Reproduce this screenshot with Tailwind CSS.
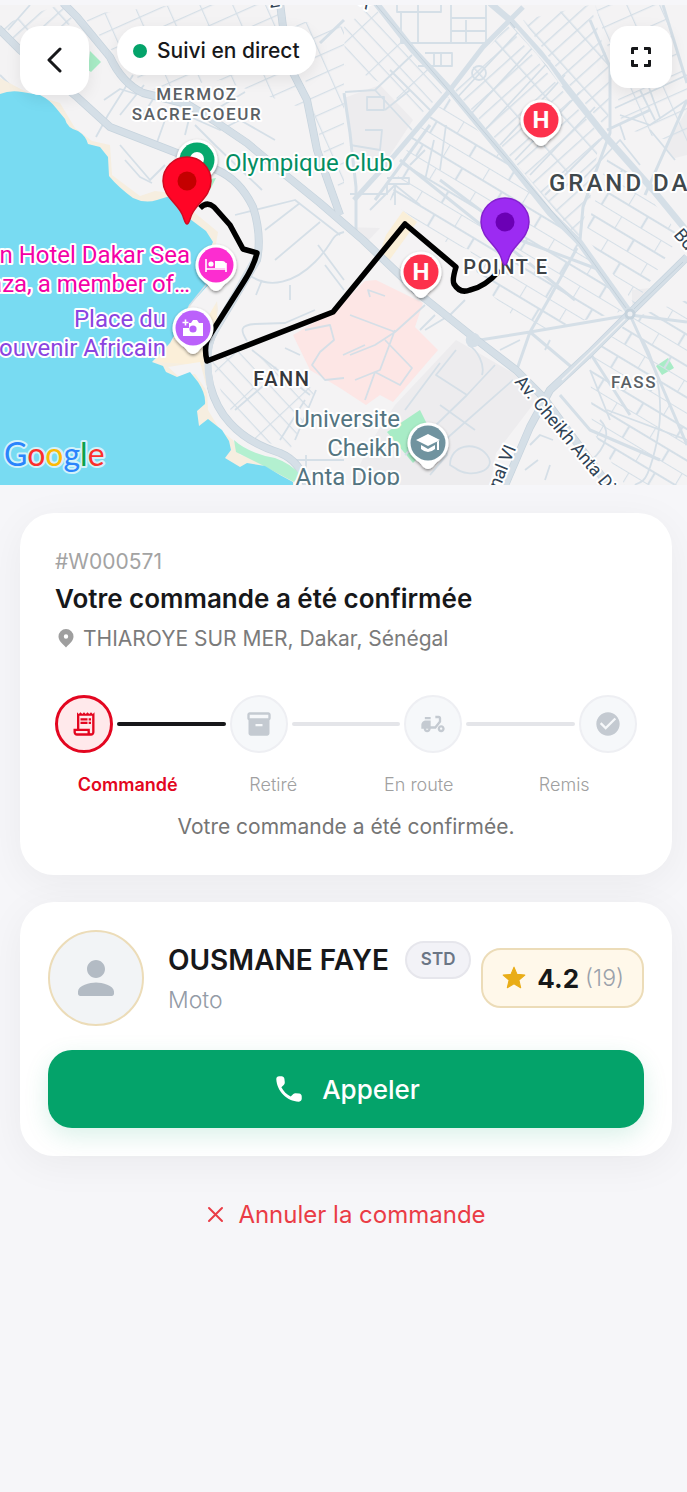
<!DOCTYPE html>
<html lang="fr">

<head>
  <meta charset="UTF-8">
  <meta name="viewport" content="width=device-width, initial-scale=1.0">
  <title>Suivi de commande</title>
  <script src="https://cdn.jsdelivr.net/npm/@tailwindcss/browser@4"></script>
</head>

<body class="bg-[#f6f6f9] min-h-screen pt-[5px] text-[#17181a] font-['Inter',sans-serif]">

  <!-- Map -->
  <section class="relative h-[480px] overflow-hidden bg-[#f4f3f4]">
    <svg class="block w-full h-full" viewBox="0 5 687 480" preserveAspectRatio="xMidYMid slice" role="img" aria-label="Carte de Dakar">
      <defs>
        <pattern id="grid-ne" width="34" height="12" patternUnits="userSpaceOnUse" patternTransform="rotate(-42)">
          <path d="M0 0H34M0 0V12" fill="none" stroke="#d5dfe7" stroke-width="3" />
        </pattern>
        <pattern id="grid-wide" width="46" height="27" patternUnits="userSpaceOnUse" patternTransform="rotate(31)">
          <path d="M0 0H46M0 0V14M23 14V27M0 14H46" fill="none" stroke="#d5dfe7" stroke-width="2.2" />
        </pattern>
        <pattern id="grid-nw" width="38" height="13" patternUnits="userSpaceOnUse" patternTransform="rotate(47)">
          <path d="M0 0H38M0 0V13" fill="none" stroke="#d5dfe7" stroke-width="2.4" />
        </pattern>
        <pattern id="grid-top" width="30" height="18" patternUnits="userSpaceOnUse" patternTransform="rotate(-24)">
          <path d="M0 0H30M0 0V18" fill="none" stroke="#d5dfe7" stroke-width="2.4" />
        </pattern>
        <filter id="shadow" x="-30%" y="-30%" width="160%" height="170%">
          <feDropShadow dx="0" dy="1.5" stdDeviation="1.5" flood-color="#000" flood-opacity=".45" />
        </filter>
        <path id="poi" d="M0 26C-4 26-6 22-9 19-15 15-20.500 9-20.500 0A20.500 20.500 0 0 1 20.500 0C20.500 9 15 15 9 19 6 22 4 26 0 26Z" />
        <path id="pin" d="M0 43C-2 43-3 37-5 33-10 22-24 15-24 0A24 24 0 0 1 24 0C24 15 10 22 5 33 3 37 2 43 0 43Z" />
      </defs>

      <!-- Land use -->
      <g fill="#edecee">
        <path d="M344 98L380 85 413 120 388 158 356 160Z" />
        <path d="M456 340L513 373 538 398 496 453 490 485H350L372 440 395 405Z" />
        <path d="M664 148L687 110V155L675 158Z" />
        <path d="M344 227L380 228 366 243Z" />
        <path d="M632 290L650 288 645 300 632 305Z" />
      </g>
      <path d="M293 335L334 311 365 281 376 280 423 303 415 327 438 350 393 402 380 395 366 405 340 388 310 370Z" fill="#fde6e5" />
      <path d="M386 235L403 211 417 222 388 262 378 258Z" fill="#faefd8" />
      <g fill="#a8ecc6">
        <path d="M90 51L101 62 91 72 88 70Z" />
        <path d="M387 432L420 410 435 440 413 463Z" />
        <path d="M656 366L668 358 674 368 662 375Z" />
        <path d="M205 180L216 178 210 190Z" />
      </g>

      <!-- Street grids -->
      <path d="M523 20L590 5 610 67 608 130 565 80Z" fill="url(#grid-ne)" />
      <path d="M595 5H663L687 83V145L622 128 614 67Z" fill="url(#grid-top)" />
      <path d="M455 90L507 25 600 135 590 200 578 238Z" fill="url(#grid-ne)" />
      <path d="M344 27L372 5 445 90 415 120 385 85 345 65Z" fill="url(#grid-nw)" />
      <path d="M410 140L448 97 575 240 628 310 530 333 480 283 470 250 440 240 390 200Z" fill="url(#grid-wide)" />
      <path d="M585 235L610 150 680 235 635 305Z" fill="url(#grid-wide)" />
      <path d="M590 358L632 318 687 300V485H625L592 430Z" fill="url(#grid-wide)" />
      <path d="M212 362L240 345 315 390 290 450 245 435 222 395Z" fill="url(#grid-nw)" />
      <path d="M82 15L175 5H280L287 60 308 110 220 80 150 90 120 60Z" fill="url(#grid-top)" />
      <path d="M290 20L344 27V200L323 150Z" fill="url(#grid-top)" />
      <path d="M0 25L60 5 75 22 20 45Z" fill="url(#grid-ne)" />

      <!-- Minor streets -->
      <g fill="none" stroke="#d5dfe7" stroke-width="1.8" stroke-linejoin="round">
        <path d="M397 5V12H441V5M401 12V43H490M418 5V42M451 5V43M451 18H486M451 31H486M466 20V42M486 5V42M425 53H452V66H418M434 53V65M441 53V65" />
        <path d="M96 137L108 115 125 88 133 75M104 100L120 89 136 94M120 115L144 85M140 120L160 88M155 148L165 120 190 105M185 135L190 115M195 125L215 145 262 190M120 145L150 180 165 165M125 160L140 177 152 183M170 108L220 130 240 120 275 140M215 110L245 92M235 215L295 200 340 235M265 230L300 203M275 260L320 222" />
        <path d="M249 275C270 290 295 282 315 262S330 235 344 232M262 280L256 295M290 285V300M318 245L344 280M325 265L344 290" />
        <path d="M247 341C240 330 240 325 255 324L285 323 315 310M252 350L310 395M285 348L300 355M270 380L235 410M280 440L305 400M306 455V485M290 460H344M316 390L295 440" />
        <path d="M305 330L330 325 334 340 320 352 312 365 325 380 344 378M350 315L395 332 375 345 350 355M395 330L380 370 355 380M385 340L412 368 400 385 375 372 365 400M395 332L425 305M370 297L368 290 385 296M343 355L365 345" />
        <path d="M456 350L436 375 467 395M440 363L405 410M495 365L467 395 405 455M440 405L475 430M513 380L445 440 447 455 430 475M468 345C478 350 485 365 482 375M450 465C450 445 475 440 487 455S470 480 455 468Z" />
        <circle cx="479" cy="73" r="7" />
        <path d="M620 115L650 125 687 100M640 90L655 120M648 85L660 118M615 108L687 75M620 125L625 140M650 130L675 160M582 180L620 140 640 165M410 165L425 150M440 170L446 125M425 180L434 140" />
        <path d="M345 92L375 90 412 55M375 90L412 130M390 70L430 110M385 110L410 90M455 100L520 30M470 115L535 45M485 130L550 60M500 145L565 75M515 160L580 92M530 175L595 107M545 195L605 135" />
        <path d="M365 130H382L380 150 350 145M367 97H384V110H367ZM387 178H409V184H387V194H350M395 185V205" />
        <path d="M530 445L540 435 553 440M525 470L538 460M545 480L550 465M600 420C615 435 600 455 585 465M643 340C660 370 665 410 655 450S640 480 635 485M607 410L687 440M590 370L610 420" />
        <path d="M370 210L395 185 420 205M420 330L435 315M425 330L445 318M465 300L450 315M520 340L500 350M550 340L545 350M30 5L8 30M35 60L50 48M0 75L15 90" />
      </g>

      <!-- Secondary streets -->
      <g fill="none" stroke="#d5dfe7" stroke-width="3" stroke-linejoin="round">
        <path d="M480 340L530 332 630 315 687 322M530 332L575 370M516 372L530 332 550 297 577 248M590 20L610 67V133L600 160 583 207 580 240M663 5L687 83M344 93L350 133 356 187V235M630 315L655 370 687 445M607 130L650 110M344 20L320 43M560 395L590 430 660 460M430 125L375 200M440 180L520 240 600 270M400 160L575 300M590 353L630 415M687 100L645 195" />
      </g>

      <!-- Main roads -->
      <g fill="none" stroke="#c6d3dd" stroke-width="8" stroke-linejoin="round">
        <path id="r1" d="M63 3L77 17 110 57Q122 83 143 93L187 104 213 120 247 143 283 173 320 203 363 240 423 297 473 337 516 370 543 397 612 490" />
        <path id="r2" d="M-2 28L20 50 77 97 110 127 177 153 217 170Q240 180 253 207 262 235 257 260L215 330Q202 352 210 385 216 408 230 423 248 443 280 453 302 462 308 490" />
        <path id="r3" d="M280 3L283 27 290 67 307 100 317 150 330 187 340 215" />
        <path id="r4" d="M687 257L630 313 590 353 550 390 530 427 503 490" />
      </g>
      <g fill="none" stroke="#d5dfe7" stroke-width="6.6">
        <use href="#r1" stroke-width="6.6" /><use href="#r2" /><use href="#r3" /><use href="#r4" />
        <path d="M376 3L413 50 450 90 510 163 550 213 580 243 630 313M490 3L510 20 540 53 563 83 606 137 653 190 690 235" />
        <path d="M523 7L483 47 450 90 393 157 354 200" stroke-width="5" />
        <circle cx="473" cy="340" r="4" />
      </g>
      <path d="M683 262L634 309M625 319L580 362M510 22L540 57 558 80M376 5L450 92 580 244 626 308" fill="none" stroke="#c3d0da" stroke-width="1" />
      <path d="M625 319L562 380M515 28L548 66 562 86" fill="none" stroke="#f0f1f3" stroke-width="1.6" />
      <circle cx="630" cy="314" r="4" fill="#eef0f3" stroke="#c6d3dd" stroke-width="3" />

      <!-- Coast and sea -->
      <path d="M0 78L30 94 60 103 75 128 92 141 110 145 112 175 140 196 155 191 172 193 195 213 218 232 215 250 204 262 213 265 218 310 212 340 206 365 208 410 220 430 233 440 240 455 265 462 285 470 303 488 0 488Z" fill="#f6eee0" />
      <path d="M190 308L215 305 217 318 203 365 155 362 170 345Z" fill="#fbefd9" />
      <path d="M168 367L200 362 210 400 206 390 195 374 178 376Z" fill="#f4f3f4" />
      <path d="M215 245L240 240 235 270 205 322 188 312 198 290Z" fill="#f4f3f4" />
      <path d="M234 440Q248 453 275 458 292 464 300 475L294 482 262 465 236 452Z" fill="#b3f0d0" />
      <path d="M0 94Q10 90 22 92L40 95Q50 100 56 108L65 119Q67 128 78 131 86 136 88 144L100 147 108 157 109 176Q118 187 133 198 145 204 157 200L170 196 190 219 206 231 213 242 204 262 210 283 188 307 180 325 170 343 152 362 163 366 166 372 177 377 190 372 198 382Q206 394 205 404L197 411 199 426 208 419 222 430 229 441 231 450 225 458 240 467 247 463 265 466 280 475 293 482V490H0Z" fill="#78dbf2" />
      <path d="M210 280L189 306" stroke="#d5dfe7" stroke-width="1.5" />
      <path d="M257 256L215 330Q204 348 210 385" fill="none" stroke="#d5dfe7" stroke-width="7" />

      <!-- Courier route -->
      <path d="M200 208Q207 201 214 207L230 225 243 249 257 253Q254 266 243 283L210 335Q203 345 207 361L333 312 405 224 456 267Q452 280 454 284 460 294 470 290 485 287 500 270" fill="none" stroke="#000" stroke-width="5.5" stroke-linejoin="round" />

      <!-- Place markers -->
      <g transform="translate(197 160)">
        <use href="#poi" fill="#fff" filter="url(#shadow)" />
        <circle r="17.5" fill="#06a96d" /><circle r="7" cy="-1" fill="#fff" />
      </g>
      <g transform="translate(216 265)">
        <use href="#poi" fill="#fff" filter="url(#shadow)" />
        <circle r="17.5" fill="#fc2dd0" />
        <path d="M-10-6V7M-10 4H10M10 7V-2" fill="none" stroke="#fff" stroke-width="1.6" />
        <circle cx="-5" cy="-1" r="2.6" fill="#fff" /><path d="M-1-4H6Q10-4 10 0V3H-1Z" fill="#fff" />
      </g>
      <g transform="translate(193 328)">
        <use href="#poi" fill="#fff" filter="url(#shadow)" />
        <circle r="17.5" fill="#bb61fb" />
        <path d="M-10 0H-4V-5H-2L0-8H4L6-5H10V8H-10Z" fill="#fff" />
        <path d="M-7.5-8.5V-2.5M-10.5-5.5H-4.5" stroke="#fff" stroke-width="1.6" />
        <circle r="3.6" cy="1" fill="#bb61fb" />
      </g>
      <g font-family="Roboto, sans-serif" font-size="24" font-weight="700" text-anchor="middle">
        <g transform="translate(541 120)">
          <use href="#poi" fill="#fff" filter="url(#shadow)" />
          <circle r="17.5" fill="#fd314c" /><text y="8" fill="#fff">H</text>
        </g>
        <g transform="translate(421 272)">
          <use href="#poi" fill="#fff" filter="url(#shadow)" />
          <circle r="17.5" fill="#fd314c" /><text y="8" fill="#fff">H</text>
        </g>
      </g>
      <g transform="translate(428 443)">
        <use href="#poi" fill="#fff" filter="url(#shadow)" />
        <circle r="17.5" fill="#70939f" />
        <path d="M0-9L-12-3 0 3 12-3ZM-7 2V6Q0 12 7 6V2L0 6ZM9-2H11V7H9Z" fill="#fff" />
      </g>

      <!-- Labels -->
      <g font-family="Roboto, sans-serif" stroke="#fff" stroke-width="4" stroke-linejoin="round" paint-order="stroke">
        <g class="tracking-widest" text-anchor="middle" font-weight="500" fill="#5a6065">
          <text x="197" y="100" font-size="17">MERMOZ</text>
          <text x="197" y="120" font-size="17">SACRE-COEUR</text>
          <text x="634" y="388" font-size="17">FASS</text>
          <text x="282" y="386" font-size="20" fill="#35383c">FANN</text>
          <text x="506" y="274" font-size="20" fill="#3e4347">POINT E</text>
          <text x="549" y="191" class="tracking-[3px]" font-size="24" fill="#3f484c" text-anchor="start">GRAND DAKAR</text>
        </g>
        <g font-size="24">
          <text x="225" y="171" fill="#038e63">Olympique Club</text>
          <g text-anchor="end">
            <text x="190" y="263" fill="#f400a6">Pullman Hotel Dakar Sea</text>
            <text x="190" y="292" fill="#f400a6">Plaza, a member of…</text>
            <text x="166" y="327" fill="#8b44e0">Place du</text>
            <text x="166" y="356" fill="#8b44e0">Souvenir Africain</text>
            <text x="400" y="427" fill="#547581">Universite</text>
            <text x="400" y="456" fill="#547581">Cheikh</text>
            <text x="400" y="485" fill="#547581">Anta Diop</text>
          </g>
        </g>
        <g font-size="18" fill="#2f4254">
          <text transform="translate(514 382) rotate(50)">Av. Cheikh Anta Diop</text>
          <text x="54" text-anchor="end" transform="translate(496 498) rotate(-68)">Canal VI</text>
          <text transform="translate(673 235) rotate(50)">Bd</text>
          <text transform="translate(270 8) rotate(-10)">Z</text>
          <text transform="translate(358 3) rotate(40)">R</text>
        </g>
        <text x="4" y="466" font-family="Lato, sans-serif" font-size="32" font-weight="400" stroke="#d3f2fa"><tspan fill="#2a84fc">G</tspan><tspan fill="#fc2f2b">o</tspan><tspan fill="#fdba05">o</tspan><tspan fill="#2a84fc">g</tspan><tspan fill="#0aa14b">l</tspan><tspan fill="#fc2f2b">e</tspan></text>
      </g>

      <!-- Courier and destination -->
      <g transform="translate(187 181)">
        <use href="#pin" fill="#ff0526" stroke="#d10a20" stroke-width="1.5" /><circle r="9.5" fill="#c40000" />
      </g>
      <g transform="translate(505 222)">
        <use href="#pin" fill="#9c2bf2" stroke="#8420cf" stroke-width="1.5" /><circle r="9.5" fill="#6b00b5" />
      </g>
    </svg>

    <!-- Controls over the map -->
    <div class="absolute inset-x-0 top-0 flex items-start pl-5 pr-[15px] pt-[21px]">
      <button type="button" aria-label="Retour" class="size-[69px] rounded-[20px] bg-white shadow-[0_4px_16px_rgba(0,0,0,0.08)] flex items-center justify-center">
        <svg class="size-7" viewBox="0 0 28 28" fill="none" stroke="#17181a" stroke-width="3" stroke-linecap="round" stroke-linejoin="round"><path d="M19 2L8 13 19 24" /></svg>
      </button>
      <div class="ml-7 h-[49px] rounded-full bg-white shadow-[0_4px_16px_rgba(0,0,0,0.08)] flex items-center gap-[10px] px-4">
        <span class="size-[14px] rounded-full bg-[#04a36a]"></span>
        <span class="text-[21px] font-medium">Suivi en direct</span>
      </div>
      <button type="button" aria-label="Plein écran" class="ml-auto size-[62px] rounded-[18px] bg-white shadow-[0_4px_16px_rgba(0,0,0,0.08)] flex items-center justify-center">
        <svg class="size-6" viewBox="0 0 24 24" fill="none" stroke="#17181a" stroke-width="3" stroke-linejoin="round"><path d="M3.500 9V3.500H9M15 3.500H20.500V9M20.500 15V20.500H15M9 20.500H3.500V15" /></svg>
      </button>
    </div>
  </section>

  <main class="pl-5 pr-[15px] pt-7">
    <!-- Order status -->
    <section class="rounded-[34px] bg-white px-[35px] pt-9 pb-[34px] shadow-[0_8px_40px_rgba(0,0,0,0.05)]">
      <p class="text-[21px] leading-[26px] text-[#a3a3a3]">#W000571</p>
      <h1 class="mt-[6px] text-[26px] leading-9 font-semibold">Votre commande a été confirmée</h1>
      <p class="mt-2 flex items-center text-[21px] leading-7 text-[#7b7b7b]">
        <svg class="w-[22px] h-6 mr-[6px] shrink-0" viewBox="0 0 22 24"><path fill="#9e9e9e" fill-rule="evenodd" d="M11 2A7.500 7.500 0 0 0 3.500 9.500C3.500 14 7.500 16.500 11 20.500 14.500 16.500 18.500 14 18.500 9.500A7.500 7.500 0 0 0 11 2ZM11 11.700A2.200 2.200 0 1 1 11 7.300 2.200 2.200 0 0 1 11 11.700Z" /></svg>
        THIAROYE SUR MER, Dakar, Sénégal
      </p>

      <div class="mt-[42px] flex items-center gap-1">
        <div class="size-[58px] shrink-0 rounded-full border-3 border-[#e30620] bg-[#ffe9eb] flex items-center justify-center">
          <svg class="size-7" viewBox="0 0 24 24" fill="#e30620"><path d="M19.500 3.500 18 2l-1.500 1.500L15 2l-1.500 1.500L12 2l-1.500 1.500L9 2 7.500 3.500 6 2v14H3v3c0 1.660 1.340 3 3 3h12c1.660 0 3-1.340 3-3V2l-1.500 1.500zM15 20H6c-.550 0-1-.450-1-1v-1h10v2zm4-1c0 .550-.450 1-1 1s-1-.450-1-1v-3H8V5h11v14zM9 7h6v2H9zm7 0h2v2h-2zm-7 3h6v2H9zm7 0h2v2h-2z" /></svg>
        </div>
        <div class="h-1 flex-1 rounded-full bg-[#17181a]"></div>
        <div class="size-[58px] shrink-0 rounded-full border-2 border-[#eeeff3] bg-[#f6f8fa] flex items-center justify-center">
          <svg class="size-7" viewBox="0 0 24 24" fill="#c4cad1"><path fill-rule="evenodd" d="M20 2H4c-1 0-2 .900-2 2v3.010c0 .720.430 1.340 1 1.690V20c0 1.100 1.100 2 2 2h14c.900 0 2-.900 2-2V8.700c.570-.350 1-.970 1-1.690V4c0-1.100-1-2-2-2zm-5 12H9v-2h6v2zm5-7H4V4h16v3z" /></svg>
        </div>
        <div class="h-1 flex-1 rounded-full bg-[#e4e5e9]"></div>
        <div class="size-[58px] shrink-0 rounded-full border-2 border-[#eeeff3] bg-[#f6f8fa] flex items-center justify-center">
          <svg class="size-7" viewBox="0 0 24 24" fill="#c4cad1"><path fill-rule="evenodd" d="M19 7c0-1.100-.900-2-2-2h-3v2h3v2.650L13.520 14H10V9H6c-2.210 0-4 1.790-4 4v3h2c0 1.660 1.340 3 3 3s3-1.340 3-3h4.480L19 10.350V7zM7 17c-.550 0-1-.450-1-1h2c0 .550-.450 1-1 1zM5 6h5v2H5zM19 13c-1.660 0-3 1.340-3 3s1.340 3 3 3 3-1.340 3-3-1.340-3-3-3zm0 4c-.550 0-1-.450-1-1s.450-1 1-1 1 .450 1 1-.450 1-1 1z" /></svg>
        </div>
        <div class="h-1 flex-1 rounded-full bg-[#e4e5e9]"></div>
        <div class="size-[58px] shrink-0 rounded-full border-2 border-[#eeeff3] bg-[#f6f8fa] flex items-center justify-center">
          <svg class="size-7" viewBox="0 0 24 24" fill="#c4cad1"><path d="M12 2C6.480 2 2 6.480 2 12s4.480 10 10 10 10-4.480 10-10S17.520 2 12 2zm-2 15-5-5 1.410-1.410L10 14.170l7.590-7.590L19 8l-9 9z" /></svg>
        </div>
      </div>
      <ol class="mt-5 grid grid-cols-4 text-center text-[18px] leading-6 font-light text-[#a0a0a0]">
        <li class="font-semibold text-[#e30620]">Commandé</li>
        <li>Retiré</li>
        <li>En route</li>
        <li>Remis</li>
      </ol>
      <p class="mt-4 text-center text-[21px] leading-7 text-[#757575]">Votre commande a été confirmée.</p>
    </section>

    <!-- Driver -->
    <section class="mt-[27px] rounded-[34px] bg-white p-7 shadow-[0_8px_40px_rgba(0,0,0,0.05)]">
      <div class="flex items-center">
        <div class="size-24 shrink-0 rounded-full border-2 border-[#ecdcb8] bg-[#f2f4f6] flex items-center justify-center">
          <svg class="size-[54px]" viewBox="0 0 24 24" fill="#b3bbc4"><path d="M12 12c2.210 0 4-1.790 4-4s-1.790-4-4-4-4 1.790-4 4 1.790 4 4 4zm0 2c-2.670 0-8 1.340-8 4v1c0 .550.450 1 1 1h14c.550 0 1-.450 1-1v-1c0-2.660-5.330-4-8-4z" /></svg>
        </div>
        <div class="ml-6">
          <div class="flex items-center gap-4">
            <h2 class="text-[28px] leading-10 font-semibold whitespace-nowrap">OUSMANE FAYE</h2>
            <span class="h-[38px] rounded-full border-2 border-[#e6e6ec] bg-[#f2f2f7] px-[14px] flex items-center text-[17px] font-semibold text-[#6b7685]">STD</span>
          </div>
          <p class="mt-1 text-[23px] leading-8 font-light text-[#939ba6]">Moto</p>
        </div>
        <div class="ml-auto h-[60px] shrink-0 rounded-[20px] border-2 border-[#ecdcb8] bg-[#fff8ea] px-[18px] flex items-center">
          <svg class="size-[26px]" viewBox="0 0 24 24" fill="#e9ad17" stroke="#e9ad17" stroke-width="1" stroke-linejoin="round"><path d="M12 17.270 18.180 21l-1.640-7.030L22 9.240l-7.190-.610L12 2 9.190 8.630 2 9.240l5.460 4.730L5.820 21z" /></svg>
          <span class="ml-[10px] text-[26px] font-bold">4.2</span>
          <span class="ml-[6px] text-[23px] font-light text-[#9aa1ab]">(19)</span>
        </div>
      </div>
      <button type="button" class="mt-6 h-[78px] w-full rounded-3xl bg-[#04a36a] shadow-[0_8px_24px_rgba(4,163,106,0.15)] flex items-center justify-center gap-4 text-[26px] font-medium text-white">
        <svg class="size-[34px]" viewBox="0 0 24 24" fill="currentColor"><path d="M19.230 15.260l-2.540-.290c-.610-.070-1.210.140-1.640.570l-1.840 1.840c-2.830-1.440-5.150-3.750-6.590-6.590l1.850-1.850c.430-.430.640-1.030.570-1.640l-.290-2.520c-.120-1.010-.970-1.770-1.990-1.770H5.030c-1.130 0-2.070.940-2 2.070.530 8.540 7.360 15.360 15.890 15.890 1.130.070 2.070-.870 2.070-2v-1.730c.010-1.010-.750-1.860-1.760-1.980z" /></svg>
        Appeler
      </button>
    </section>

    <button type="button" class="mx-auto mt-10 flex h-[38px] items-center gap-3 text-2xl text-[#ea3c46]">
      <svg class="size-5" viewBox="0 0 20 20" fill="none" stroke="currentColor" stroke-width="2" stroke-linecap="round"><path d="M3 3L16 16M16 3L3 16" /></svg>
      Annuler la commande
    </button>
  </main>
</body>

</html>
